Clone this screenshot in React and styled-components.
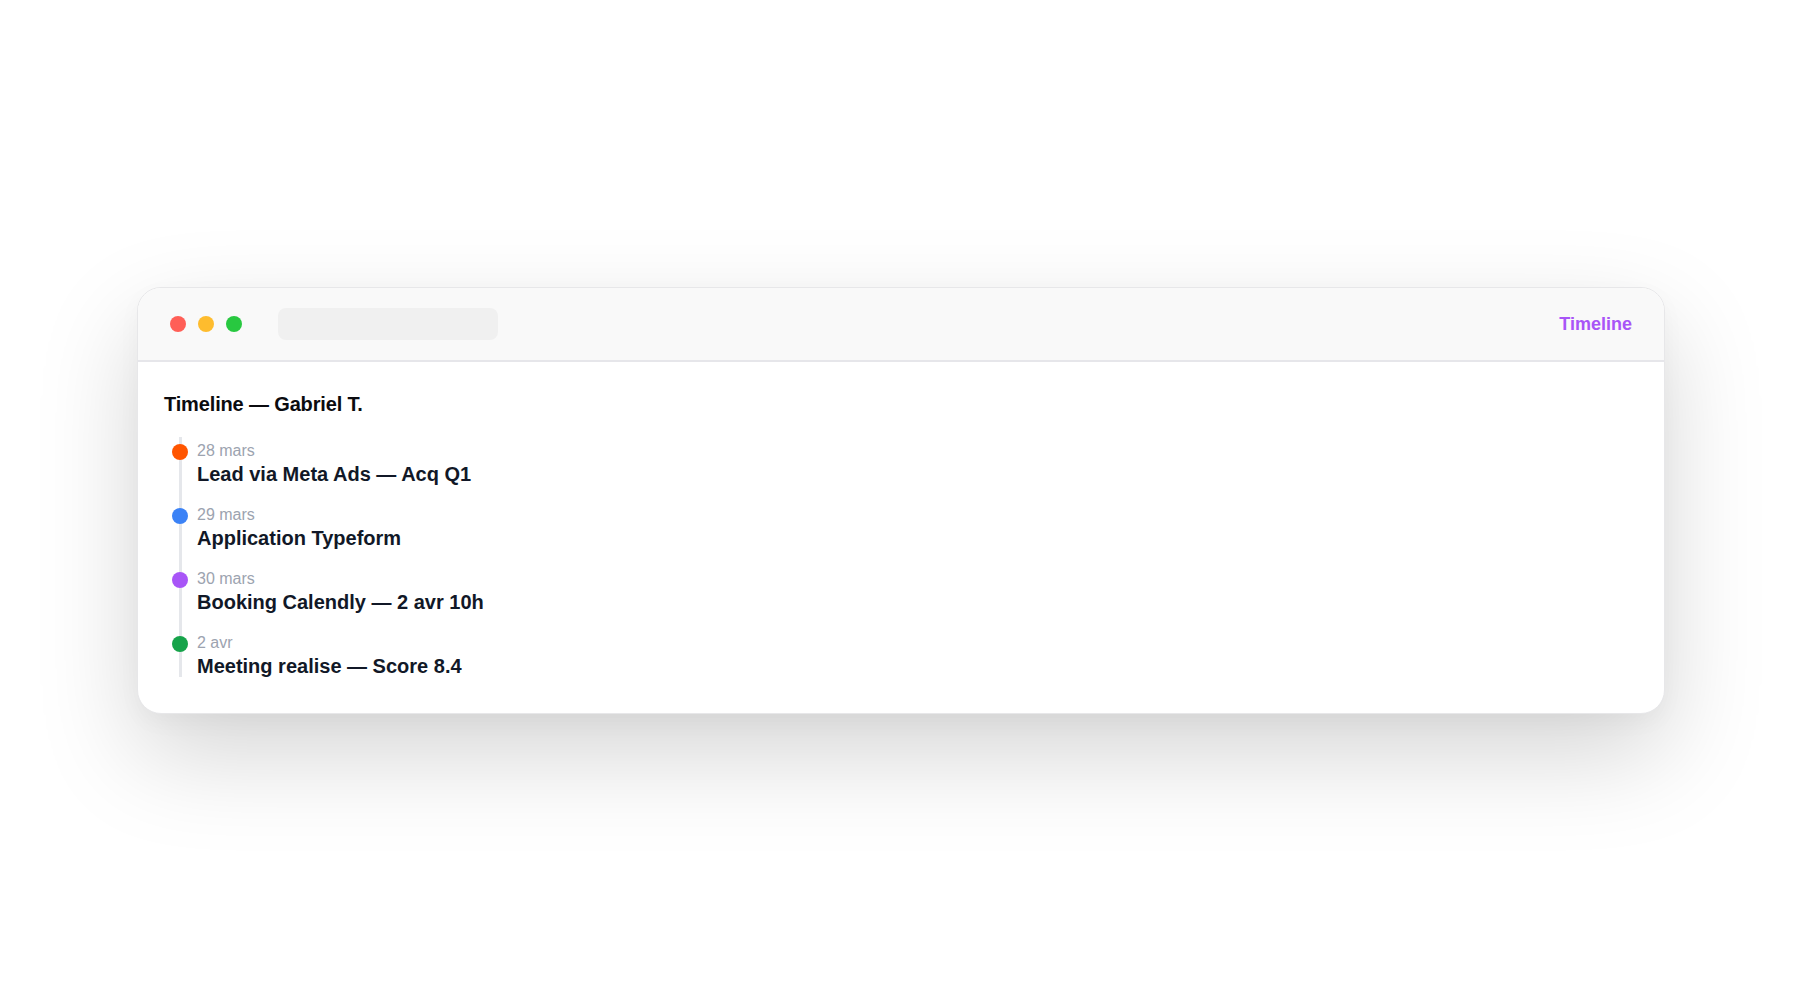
import React from "react";
import styled, { createGlobalStyle } from "styled-components";

const Global = createGlobalStyle`
  html, body { margin: 0; padding: 0; background: #ffffff; }
  body { font-family: "Liberation Sans", Arial, Helvetica, sans-serif; -webkit-font-smoothing: antialiased; }
`;

const Stage = styled.div`
  width: 1800px;
  height: 1000px;
  box-sizing: border-box;
  padding-left: 2px;
  display: flex;
  align-items: center;
  justify-content: center;
  background: #ffffff;
`;

const Window = styled.div`
  width: 1528px;
  box-sizing: border-box;
  background: #ffffff;
  border: 1px solid #e7e7e9;
  border-radius: 24px;
  overflow: hidden;
  box-shadow: 0 40px 100px rgba(0, 0, 0, 0.17), 0 8px 24px rgba(0, 0, 0, 0.03);
`;

const TitleBar = styled.div`
  height: 72px;
  display: flex;
  align-items: center;
  padding: 0 32px;
  background: #f9f9f9;
  border-bottom: 2px solid #e6e6ea;
`;

const Lights = styled.div`
  display: flex;
  gap: 12px;
`;

const Light = styled.span`
  width: 16px;
  height: 16px;
  border-radius: 50%;
  background: ${(p) => p.$color};
`;

const UrlBar = styled.div`
  width: 220px;
  height: 32px;
  margin-left: 36px;
  border-radius: 8px;
  background: #f0f0f0;
`;

const TabLabel = styled.div`
  margin-left: auto;
  margin-top: 2px;
  font-size: 18px;
  font-weight: 700;
  color: #a855f7;
`;

const Content = styled.div`
  padding: 30px 28px 34px 26px;
`;

const Heading = styled.h1`
  margin: 0 0 21px;
  font-size: 20px;
  line-height: 24px;
  font-weight: 700;
  color: #0b0b0f;
  letter-spacing: -0.15px;
`;

const List = styled.div`
  position: relative;
  display: flex;
  flex-direction: column;
  gap: 18px;
  padding-top: 4px;

  &::before {
    content: "";
    position: absolute;
    left: 15px;
    top: 0;
    bottom: 2px;
    width: 3px;
    background: #e5e7eb;
  }
`;

const Item = styled.div`
  position: relative;
  display: grid;
  grid-template-columns: 16px 1fr;
  column-gap: 9px;
  margin-left: 8px;
`;

const Dot = styled.span`
  width: 16px;
  height: 16px;
  margin-top: 3px;
  border-radius: 50%;
  background: ${(p) => p.$color};
  position: relative;
  z-index: 1;
`;

const Texts = styled.div`
  display: flex;
  flex-direction: column;
`;

const DateText = styled.div`
  font-size: 16px;
  line-height: 20px;
  color: #9ca3af;
`;

const Title = styled.div`
  font-size: 20px;
  line-height: 26px;
  font-weight: 700;
  color: #111827;
`;

const events = [
  { date: "28 mars", title: "Lead via Meta Ads — Acq Q1", color: "#ff5500" },
  { date: "29 mars", title: "Application Typeform", color: "#3b82f6" },
  { date: "30 mars", title: "Booking Calendly — 2 avr 10h", color: "#a855f7" },
  { date: "2 avr", title: "Meeting realise — Score 8.4", color: "#16a34a" },
];

export default function App() {
  return (
    <>
      <Global />
      <Stage>
        <Window>
          <TitleBar>
            <Lights>
              <Light $color="#ff5f57" />
              <Light $color="#febc2e" />
              <Light $color="#28c840" />
            </Lights>
            <UrlBar />
            <TabLabel>Timeline</TabLabel>
          </TitleBar>
          <Content>
            <Heading>Timeline — Gabriel T.</Heading>
            <List>
              {events.map((e) => (
                <Item key={e.date}>
                  <Dot $color={e.color} />
                  <Texts>
                    <DateText>{e.date}</DateText>
                    <Title>{e.title}</Title>
                  </Texts>
                </Item>
              ))}
            </List>
          </Content>
        </Window>
      </Stage>
    </>
  );
}
